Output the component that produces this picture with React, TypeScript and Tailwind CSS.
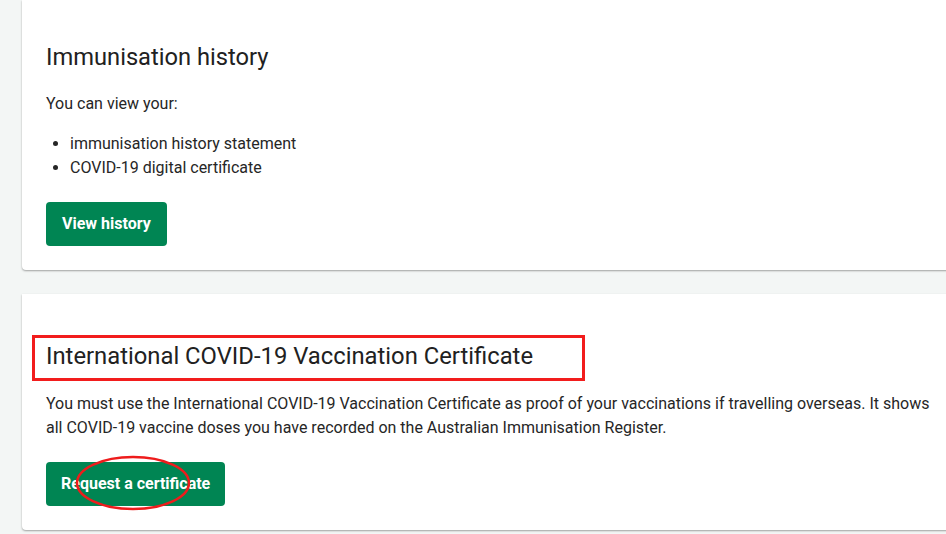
import React from "react";

export default function App() {
  return (
    <div className="relative min-h-[534px] w-[946px] overflow-hidden bg-[#f3f6f5] pl-[22px] text-[#262626]" style={{ fontFamily: "Roboto, 'Noto Sans', sans-serif" }}>
      <div className="-mr-4 rounded-bl-[4px] bg-white pb-[24px] pl-[24px] pt-[41px] shadow-[0_1px_2px_rgba(0,0,0,0.35)]">
        <h2 className="text-[23.7px] leading-[32px] text-[#212121]">Immunisation history</h2>
        <p className="mt-[19px] text-[16px] leading-[24px]">You can view your:</p>
        <ul className="mt-[16px] list-disc pl-[24px] text-[16px] leading-[24px]">
          <li>immunisation history statement</li>
          <li>COVID-19 digital certificate</li>
        </ul>
        <button className="mt-[22px] h-[44px] rounded-[4px] bg-[#008553] px-[16px] text-[16px] font-bold text-white">View history</button>
      </div>
      <div className="-mr-4 mt-[24px] rounded-bl-[4px] bg-white pb-[24px] pl-[24px] pt-[46px] shadow-[0_1px_2px_rgba(0,0,0,0.35)]">
        <div className="relative">
          <h2 className="text-[23.8px] leading-[32px] text-[#212121]">International COVID-19 Vaccination Certificate</h2>
          <div className="absolute left-[-14px] top-[-5px] h-[46px] w-[553px] border-[3px] border-[#f21d1d]" />
        </div>
        <p className="mt-[20px] max-w-[890px] text-[16px] leading-[24px]">
          You must use the International COVID-19 Vaccination Certificate as proof of your vaccinations if travelling overseas. It shows all COVID-19 vaccine doses you have recorded on the Australian Immunisation Register.
        </p>
        <div className="relative mt-[22px]">
          <button className="h-[44px] rounded-[4px] bg-[#008553] px-[15px] text-[16px] font-bold text-white">Request a certificate</button>
          <svg className="absolute left-[29px] top-[-7px]" width="116" height="56" viewBox="0 0 116 56">
            <ellipse cx="58" cy="28" rx="56" ry="26" fill="none" stroke="#ee1c1c" strokeWidth="2.5" />
          </svg>
        </div>
      </div>
    </div>
  );
}
